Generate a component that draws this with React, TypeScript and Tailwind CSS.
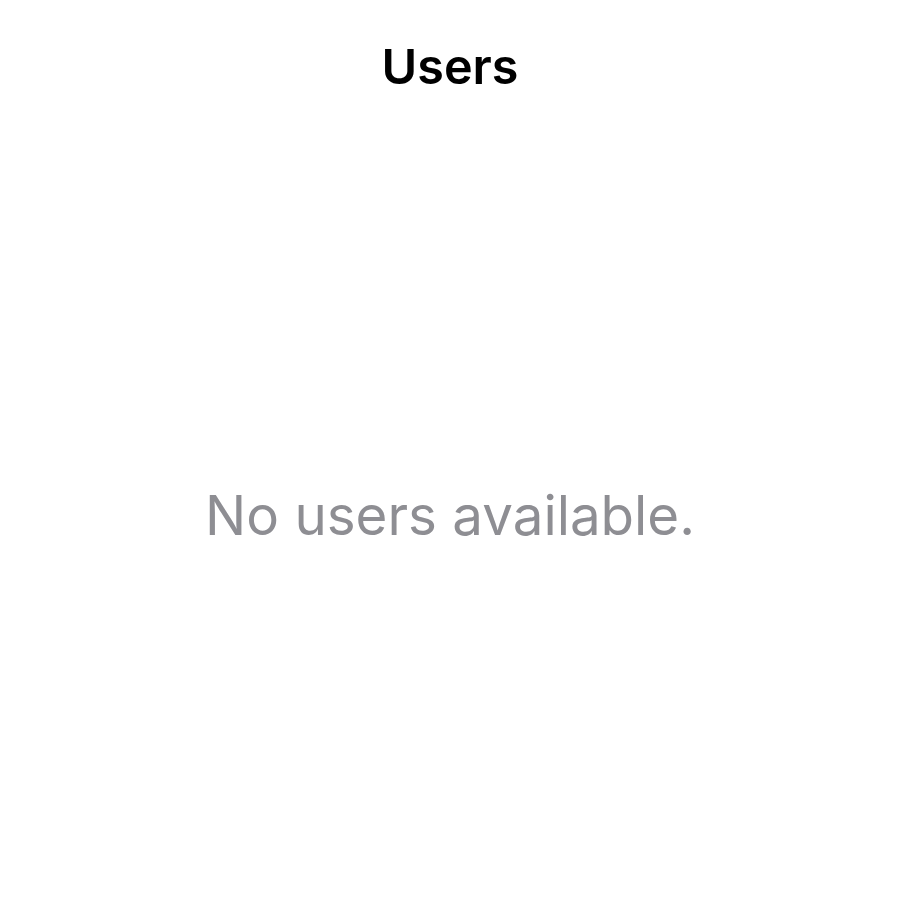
export default function App() {
  return (
    <div className="flex h-[900px] w-full flex-col bg-white font-['Inter',sans-serif]">
      <header className="flex h-[130px] items-center justify-center pt-1">
        <h1 className="text-[48.5px] font-semibold text-black">Users</h1>
      </header>
      <main className="flex flex-1 items-center justify-center">
        <p className="text-[54.7px] font-normal text-[#8e8e93]">No users available.</p>
      </main>
    </div>
  );
}
